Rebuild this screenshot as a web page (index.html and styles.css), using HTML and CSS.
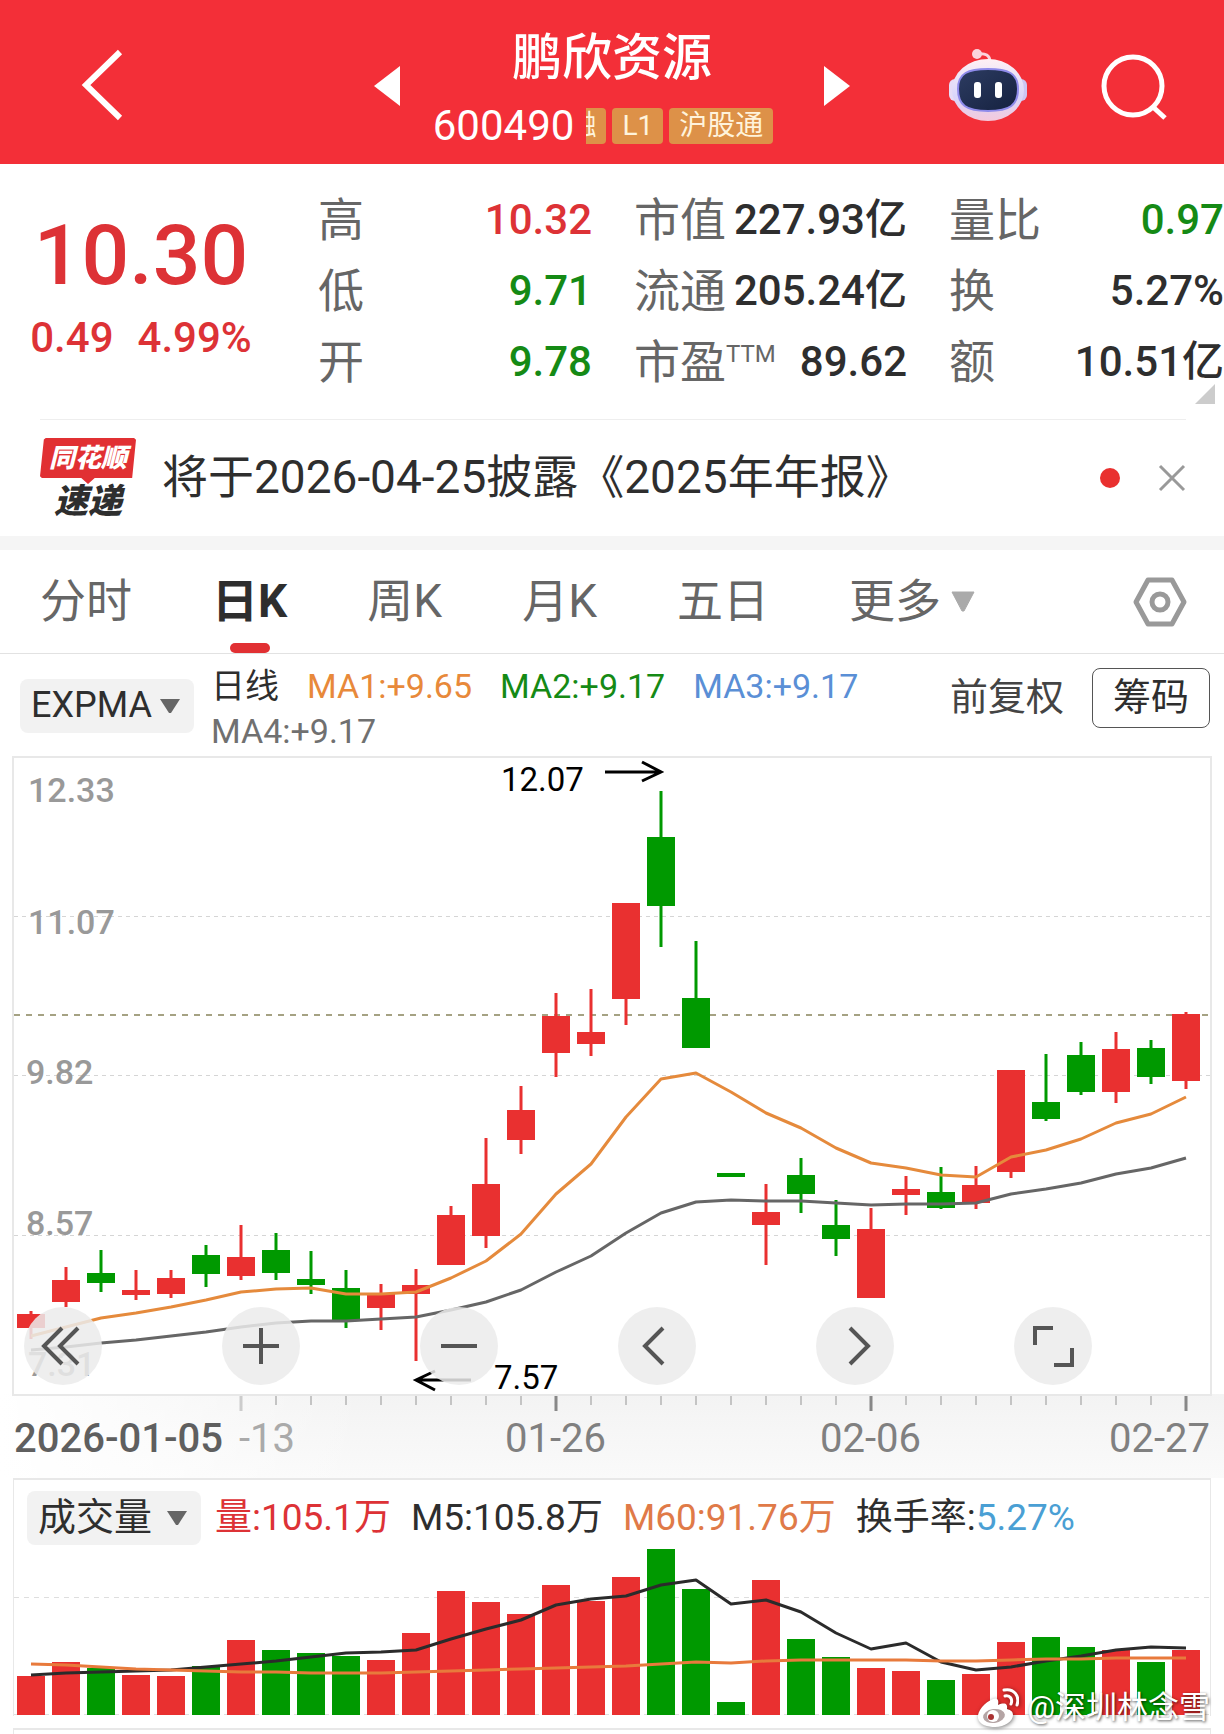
FILE: index.html
```html
<!DOCTYPE html>
<html lang="zh-CN">
<head>
<meta charset="utf-8">
<meta name="viewport" content="width=device-width, initial-scale=1">
<title>鹏欣资源 600490</title>
<link rel="stylesheet" href="styles.css">
</head>
<body>
<header class="topbar">
  <button class="icon-btn back" aria-label="返回">
    <svg width="48" height="76" viewBox="0 0 48 76"><path d="M42 4 8 37l34 33" fill="none" stroke="#fff" stroke-width="6"/></svg>
  </button>
  <button class="icon-btn prev" aria-label="上一只">
    <svg width="26" height="40" viewBox="0 0 26 40"><path d="M26 0v40L0 20z" fill="#fff"/></svg>
  </button>
  <div class="stock">
    <h1 class="stock-name">鹏欣资源</h1>
    <div class="stock-meta">
      <span class="stock-code">600490</span>
      <span class="tag tag-cut"><span>融</span></span>
      <span class="tag">L1</span>
      <span class="tag">沪股通</span>
    </div>
  </div>
  <button class="icon-btn next" aria-label="下一只">
    <svg width="26" height="40" viewBox="0 0 26 40"><path d="M0 0v40l26-20z" fill="#fff"/></svg>
  </button>
  <button class="icon-btn robot" aria-label="智能助手">
    <svg width="80" height="74" viewBox="0 0 80 74">
      <defs>
        <linearGradient id="shell" x1="0" y1="0" x2="0" y2="1"><stop offset="0" stop-color="#fff0f4"/><stop offset=".6" stop-color="#d9d6fb"/><stop offset="1" stop-color="#f4c9dc"/></linearGradient>
        <linearGradient id="visor" x1="0" y1="0" x2="1" y2="1"><stop offset="0" stop-color="#2d3c62"/><stop offset="1" stop-color="#15213f"/></linearGradient>
      </defs>
      <path d="M29 5q13-2 13 8" fill="none" stroke="#fbd3dc" stroke-width="3"/>
      <circle cx="29" cy="5" r="5" fill="#fbd3dc"/>
      <rect x="1" y="30" width="14" height="22" rx="6" fill="#e6dcf7"/>
      <rect x="65" y="30" width="14" height="22" rx="6" fill="#cdc6f4"/>
      <ellipse cx="40" cy="41" rx="36" ry="31" fill="url(#shell)"/>
      <path d="M40 20c20 0 30 4 30 20s-8 22-30 22-30-6-30-22 10-20 30-20z" fill="url(#visor)" stroke="#8f8bea" stroke-width="2"/>
      <rect x="26" y="33" width="7" height="16" rx="3" fill="#fff"/>
      <rect x="47" y="33" width="7" height="16" rx="3" fill="#fff"/>
    </svg>
  </button>
  <button class="icon-btn search" aria-label="搜索">
    <svg width="68" height="68" viewBox="0 0 68 68"><g fill="none" stroke="#fff" stroke-width="5"><circle cx="33" cy="34" r="29"/><path d="m53 55 12 11"/></g></svg>
  </button>
</header>

<main>
  <section class="quote">
    <div class="price-box up">
      <strong class="price">10.30</strong>
      <div class="change"><span>0.49</span><span>4.99%</span></div>
    </div>
    <dl class="facts">
      <div><dt>高</dt><dd class="up">10.32</dd></div>
      <div><dt>低</dt><dd class="down">9.71</dd></div>
      <div><dt>开</dt><dd class="down">9.78</dd></div>
    </dl>
    <dl class="facts">
      <div><dt>市值</dt><dd>227.93亿</dd></div>
      <div><dt>流通</dt><dd>205.24亿</dd></div>
      <div><dt>市盈<sup>TTM</sup></dt><dd>89.62</dd></div>
    </dl>
    <dl class="facts">
      <div><dt>量比</dt><dd class="down">0.97</dd></div>
      <div><dt>换</dt><dd>5.27%</dd></div>
      <div><dt>额</dt><dd>10.51亿</dd></div>
    </dl>
    <svg class="corner" width="20" height="20" viewBox="0 0 20 20"><path d="M20 0v20H0z" fill="#ccc"/></svg>
  </section>

  <section class="notice">
    <div class="brand">
      <span class="brand-top">同花顺</span>
      <span class="brand-bottom">速递</span>
    </div>
    <a class="notice-text" href="#">将于2026-04-25披露《2025年年报》</a>
    <i class="dot"></i>
    <button class="icon-btn" aria-label="关闭">
      <svg width="28" height="28" viewBox="0 0 28 28"><path d="m2 2 24 24M26 2 2 26" stroke="#999" stroke-width="3"/></svg>
    </button>
  </section>

  <nav class="tabs">
    <button>分时</button>
    <button class="active">日K</button>
    <button>周K</button>
    <button>月K</button>
    <button>五日</button>
    <button class="more">更多<svg width="24" height="21" viewBox="0 0 24 21"><path d="M1 1h22L13 20h-2z" fill="#aaa" stroke="#aaa" stroke-linejoin="round"/></svg></button>
    <button class="settings" aria-label="设置">
      <svg width="54" height="50" viewBox="0 0 54 50"><g fill="none" stroke="#999" stroke-width="5" stroke-linejoin="round"><path d="M15 3h24l12 22-12 22H15L3 25z"/><circle cx="27" cy="25" r="8"/></g></svg>
    </button>
  </nav>

  <section class="indicators">
    <label class="picker">
      <select aria-label="主图指标"><option>EXPMA</option></select>
      <svg width="20" height="14" viewBox="0 0 20 14"><path d="M0 0h20L11 14H9z" fill="#666"/></svg>
    </label>
    <p class="legend">
      <span>日线</span><span class="ma1">MA1:+9.65</span><span class="ma2">MA2:+9.17</span><span class="ma3">MA3:+9.17</span><span class="ma4">MA4:+9.17</span>
    </p>
    <button class="adjust">前复权</button>
    <button class="chips">筹码</button>
  </section>

  <section class="chart">
    <svg id="price-chart" class="plot" viewBox="14 758 1196 636" role="img" aria-label="日K线"></svg>
    <div class="controls">
      <button aria-label="最早"><svg width="78" height="78" viewBox="0 0 78 78"><path d="M38 21 20 39l18 18M54 21 36 39l18 18"/></svg></button>
      <button aria-label="放大"><svg width="78" height="78" viewBox="0 0 78 78"><path d="M21 39h36M39 21v36"/></svg></button>
      <button aria-label="缩小"><svg width="78" height="78" viewBox="0 0 78 78"><path d="M21 39h36"/></svg></button>
      <button aria-label="左移"><svg width="78" height="78" viewBox="0 0 78 78"><path d="M45 21 27 39l18 18"/></svg></button>
      <button aria-label="右移"><svg width="78" height="78" viewBox="0 0 78 78"><path d="m34 21 18 18-18 18"/></svg></button>
      <button aria-label="全屏"><svg width="78" height="78" viewBox="0 0 78 78"><path d="M21 38V21h18M58 41v17H40"/></svg></button>
    </div>
  </section>
  <section class="axis">
    <svg id="ticks" class="plot" viewBox="14 1395 1196 18" aria-hidden="true"></svg>
    <div class="dates"><span><b>2026-01-05</b><i>-13</i></span><span>01-26</span><span>02-06</span><span>02-27</span></div>
  </section>

  <section class="volume">
    <div class="volume-head">
      <label class="picker">
        <select aria-label="副图指标"><option>成交量</option></select>
        <svg width="20" height="14" viewBox="0 0 20 14"><path d="M0 0h20L11 14H9z" fill="#666"/></svg>
      </label>
      <span class="up">量:105.1万</span><span>M5:105.8万</span><span class="m60">M60:91.76万</span><span>换手率:<em>5.27%</em></span>
    </div>
    <svg id="volume-chart" class="plot" viewBox="14 1546 1196 170" role="img" aria-label="成交量"></svg>
  </section>
  <section class="next-panel"></section>
</main>

<div class="watermark">
  <svg width="42" height="40" viewBox="0 0 42 40">
    <path d="M16 11C8 14 0 23 1 30c1 7 10 9 17 9 10 0 18-6 18-12 0-4-3-5-6-6 1-5-2-7-9-4 1-4 0-8-5-6z" fill="#fff"/>
    <ellipse cx="17" cy="28" rx="11" ry="7" fill="#b5a5a5" transform="rotate(-8 17 28)"/>
    <circle cx="16" cy="28" r="6" fill="#fff"/><circle cx="14" cy="29" r="3" fill="#a33"/>
    <path d="M28 8c5-1 8 3 6 8M27 2c10-2 16 6 13 15" fill="none" stroke="#fff" stroke-width="3" stroke-linecap="round"/>
  </svg>
  <span>@深圳林念雪</span>
</div>
<script src="chart.js"></script>
</body>
</html>
```
FILE: styles.css
```css
* { box-sizing: border-box; }
body {
  margin: 0;
  background: #fff;
  color: #2e2e2e;
  font-family: Roboto, "Noto Sans CJK SC", sans-serif;
  line-height: 1.2;
  position: relative;
}
h1, p, dl, dd { margin: 0; }
button, select {
  font: inherit;
  color: inherit;
  border: 0;
  padding: 0;
  background: none;
}
svg { display: block; flex: none; }
.icon-btn { flex: none; }
.up { color: #dd3236; }
.down { color: #158a15; }

.topbar {
  display: flex;
  align-items: center;
  height: 164px;
  padding: 8px 56px 0 78px;
  background: #f32f38;
  color: #fff;
}
.prev { margin-left: auto; }
.stock {
  display: flex;
  flex-direction: column;
  align-items: center;
  width: 424px;
  gap: 10px;
}
.stock-name { font-size: 50px; line-height: 60px; font-weight: 500; margin-top: 10px; }
.stock-meta { display: flex; align-items: center; gap: 6px; margin-right: 18px; }
.stock-code { font-size: 42px; line-height: 56px; margin-right: 6px; }
.tag {
  height: 36px;
  padding: 0 10px;
  border-radius: 4px;
  background: #dd9148;
  color: #fff3dc;
  font-size: 28px;
  line-height: 36px;
}
.tag-cut {
  display: flex;
  justify-content: flex-end;
  width: 20px;
  overflow: hidden;
  border-radius: 0 4px 4px 0;
}
.robot { margin-left: 98px; }
.search { margin-left: 72px; }

.quote {
  display: grid;
  grid-template-columns: minmax(0, 276fr) minmax(0, 274fr) minmax(0, 273fr) minmax(0, 275fr);
  column-gap: 42px;
  position: relative;
  padding: 20px 0 22px;
}
.price-box {
  display: flex;
  flex-direction: column;
  align-items: center;
  padding: 22px 0 0 6px;
  font-weight: 500;
}
.price { font-size: 84px; line-height: 100px; font-weight: 500; }
.change { display: flex; gap: 24px; font-size: 42px; line-height: 64px; }
.facts > div {
  display: flex;
  align-items: center;
  justify-content: space-between;
  height: 71px;
}
.facts dt { font-size: 46px; line-height: 56px; color: #666; white-space: nowrap; }
.facts dd { font-size: 42px; line-height: 56px; font-weight: 500; white-space: nowrap; }
.facts sup { font-size: 24px; line-height: 24px; }
.corner { position: absolute; right: 9px; bottom: 15px; }

.notice {
  display: flex;
  align-items: center;
  height: 117px;
  margin: 0 38px 0 40px;
  border-top: 1px solid #eee;
}
.brand {
  display: flex;
  flex-direction: column;
  align-items: center;
  width: 96px;
  font-style: italic;
  font-weight: 900;
}
.brand-top {
  width: 96px;
  padding-bottom: 6px;
  background: #e13033;
  color: #fff;
  font-size: 26px;
  line-height: 40px;
  text-align: center;
  clip-path: polygon(6% 0, 98% 0, 100% 4%, 96% 87%, 57% 87%, 50% 100%, 43% 87%, 2% 87%, 0 83%, 4% 3%);
}
.brand-bottom { font-size: 34px; line-height: 34px; }
.notice-text { margin: 0 auto 0 26px; font-size: 46px; color: inherit; text-decoration: none; white-space: nowrap; }
.dot { width: 20px; height: 20px; margin-right: 38px; border-radius: 50%; background: #e9302f; }

.tabs {
  display: flex;
  gap: 80px;
  height: 118px;
  padding: 0 37px 0 40px;
  border-top: 14px solid #f5f5f5;
  border-bottom: 1px solid #e2e2e2;
  font-size: 46px;
  color: #666;
}
.tabs button { display: flex; flex-direction: column; justify-content: center; align-items: center; white-space: nowrap; }
.tabs .active { position: relative; color: #2e2e2e; font-weight: 700; }
.active::after {
  content: "";
  position: absolute;
  bottom: 0;
  width: 40px;
  height: 10px;
  border-radius: 5px;
  background: #e13033;
}
.tabs .more { flex-direction: row; align-items: center; gap: 10px; }
.tabs .settings { margin-left: auto; }

.indicators {
  display: flex;
  align-items: center;
  height: 104px;
  padding: 0 14px 0 20px;
  font-size: 34px;
}
.picker {
  display: grid;
  grid-template-columns: 1fr 20px;
  align-items: center;
  width: 174px;
  height: 54px;
  padding: 0 14px 0 11px;
  border-radius: 8px;
  background: #f2f2f2;
  font-size: 36px;
}
.picker select { grid-area: 1 / 1 / 2 / 3; appearance: none; width: 100%; height: 54px; }
.picker svg { grid-area: 1 / 2; pointer-events: none; }
.legend {
  display: flex;
  flex-wrap: wrap;
  flex: 1;
  column-gap: 28px;
  margin: 6px 0 0 17px;
  line-height: 45px;
}
.ma1 { color: #e8893a; }
.ma2 { color: #158a15; }
.ma3 { color: #5a8fd6; }
.ma4 { color: #707070; }
.adjust, .chips { align-self: flex-start; height: 60px; margin-top: 14px; font-size: 38px; }
.adjust { color: #444; margin-right: 28px; }
.chips { width: 118px; border: 1px solid #555; border-radius: 8px; }

.chart { position: relative; margin: 0 14px; outline: 2px solid #e8e8e8; }
.plot { width: 100%; height: auto; }
.plot text { font-family: Roboto, sans-serif; }
.controls {
  position: absolute;
  left: 10px;
  right: 118px;
  bottom: 9px;
  display: flex;
  justify-content: space-between;
}
.controls button { border-radius: 50%; background: rgba(235, 235, 235, 0.85); }
.controls path { fill: none; stroke: #555; stroke-width: 4; }

.axis {
  height: 84px;
  padding: 1px 14px 0;
  background: linear-gradient(90deg, #fff, rgba(255, 255, 255, 0) 30%), linear-gradient(#f3f3f3, #fafafa);
}
.dates {
  display: grid;
  grid-template-columns: 384fr 315fr 315fr 182fr;
  margin-top: 4px;
  font-size: 40px;
  line-height: 44px;
  color: #808080;
  text-align: center;
}
.dates span:first-child { text-align: left; }
.dates span:last-child { text-align: right; }
.dates b { font-weight: 500; color: #5f5f5f; margin-right: 16px; }
.dates i { font-style: normal; color: #aaa; }

.volume { margin: 0 13px; border: 2px solid #e8e8e8; border-width: 2px 1px 0; }
.volume-head {
  display: flex;
  align-items: center;
  gap: 20px;
  height: 66px;
  padding: 10px 0 0 13px;
  font-size: 37px;
}
.volume-head .picker { margin-right: -6px; font-size: 38px; }
.volume-head em { font-style: normal; color: #4a9fd4; }
.m60 { color: #e07a48; }
.next-panel { height: 6px; margin: 12px 13px 0; border: 1px solid #e8e8e8; border-width: 2px 1px 0; }

.watermark {
  position: absolute;
  right: 14px;
  bottom: 4px;
  display: flex;
  align-items: center;
  gap: 8px;
  color: #fff;
  font-size: 31px;
  line-height: 44px;
  text-shadow: 1px 1px 3px rgba(0, 0, 0, 0.7);
}
.watermark svg { filter: drop-shadow(1px 1px 2px rgba(0, 0, 0, 0.5)); }
```
FILE: chart.js
```js
const RED = "#e93030";
const GREEN = "#009900";
const STEP = 35;
const FIRST = 31;
const x = i => FIRST + i * STEP;

// colour, wick top, body top, body bottom, wick bottom
const candles = [
  ["r",1311,1314,1328,1339],["r",1267,1280,1302,1307],["g",1250,1273,1283,1292],["r",1270,1290,1295,1300],
  ["r",1270,1278,1294,1298],["g",1245,1255,1274,1287],["r",1225,1257,1276,1280],["g",1233,1250,1273,1280],
  ["g",1251,1279,1285,1294],["g",1270,1288,1320,1328],["r",1284,1294,1308,1330],["r",1269,1285,1294,1361],
  ["r",1206,1215,1265,1265],["r",1138,1184,1236,1248],["r",1086,1110,1140,1154],["r",993,1016,1053,1077],
  ["r",989,1032,1044,1056],["r",903,903,999,1025],["g",791,837,906,947],["g",941,998,1048,1048],
  ["g",1173,1173,1177,1177],["r",1184,1212,1225,1265],["g",1158,1175,1194,1213],["g",1200,1225,1239,1256],
  ["r",1208,1229,1298,1298],["r",1176,1189,1195,1215],["g",1167,1192,1208,1209],["r",1166,1185,1203,1209],
  ["r",1070,1070,1172,1178],["g",1054,1102,1119,1121],["g",1042,1055,1092,1095],["r",1032,1049,1092,1103],
  ["g",1040,1048,1077,1084],["r",1012,1014,1081,1089]
];
const fast = [1336,1327,1318,1313,1307,1300,1292,1289,1288,1294,1294,1292,1278,1261,1234,1194,1164,1117,1079,1073,1092,1113,1128,1148,1163,1168,1175,1177,1157,1150,1139,1123,1114,1097];
const slow = [1350,1347,1343,1340,1336,1332,1327,1323,1321,1321,1319,1317,1310,1302,1290,1272,1256,1233,1213,1202,1200,1201,1201,1203,1205,1204,1204,1203,1194,1189,1183,1174,1168,1158];

const volumes = [1676,1662,1668,1675,1676,1666,1640,1650,1653,1656,1660,1633,1591,1602,1614,1585,1601,1577,1549,1589,1702,1580,1639,1657,1668,1671,1680,1674,1642,1637,1647,1650,1662,1650];
const m5 = [1675,1673,1672,1671,1670,1667,1664,1661,1657,1653,1652,1650,1639,1629,1620,1605,1599,1596,1585,1580,1604,1600,1612,1633,1649,1643,1662,1670,1667,1661,1656,1650,1647,1648];
const m60 = [1664,1665,1667,1669,1670,1671,1672,1672,1673,1673,1673,1672,1671,1670,1669,1668,1667,1666,1664,1662,1663,1661,1660,1660,1660,1660,1661,1661,1660,1659,1659,1658,1658,1658];

const paint = c => (c === "r" ? RED : GREEN);
const rect = (cx, w, top, bottom, fill) =>
  `<rect x="${cx - w / 2}" y="${top}" width="${w}" height="${bottom - top}" fill="${fill}"/>`;
const line = (ys, stroke) =>
  `<polyline points="${ys.map((y, i) => x(i) + "," + y).join(" ")}" fill="none" stroke="${stroke}" stroke-width="3" stroke-linejoin="round"/>`;
const grid = (y, stroke, dash) =>
  `<path d="M14 ${y}H1210" stroke="${stroke}" stroke-width="1" stroke-dasharray="${dash}"/>`;
const label = (lx, y, text, size, fill, weight) =>
  `<text x="${lx}" y="${y}" font-size="${size}" fill="${fill}" font-weight="${weight}">${text}</text>`;

let svg = "";
for (const y of [916.5, 1075.5, 1235.5]) svg += grid(y, "#d5d5d5", "4 4");
for (const [lx, y, text] of [[28,802,"12.33"],[28,934,"11.07"],[26,1084,"9.82"],[26,1235,"8.57"],[28,1376,"7.31"]])
  svg += label(lx, y, text, 34, "#999", 500);
svg += `<path d="M14 1015H1210" stroke="#a5a283" stroke-width="2" stroke-dasharray="6 6"/>`;
candles.forEach(([c, hi, top, bottom, lo], i) => {
  svg += rect(x(i), 3, hi, lo, paint(c)) + rect(x(i), 28, top, bottom, paint(c));
});
svg += line(slow, "#666") + line(fast, "#e58a3c");
svg += label(501, 791, "12.07", 33, "#000", 400) + label(494, 1389, "7.57", 33, "#000", 400);
svg += `<g fill="none" stroke="#000" stroke-width="3"><path d="M605 772h54M642 762l19 10-19 9"/><path d="M471 1380h-54M435 1371l-19 9 19 10"/></g>`;
document.getElementById("price-chart").innerHTML = svg;

let ticks = "";
for (let i = 6; i < candles.length; i++) {
  const major = (i - 6) % 9 === 0;
  ticks += rect(x(i), major ? 3 : 2, 1395, major ? 1411 : 1405, i === 6 ? "#ccc" : major ? "#888" : "#c4c4c4");
}
document.getElementById("ticks").innerHTML = ticks;

let vol = grid(1597.5, "#dedede", "5 5") + grid(1714.5, "#dedede", "5 5");
volumes.forEach((top, i) => { vol += rect(x(i), 28, top, 1715, paint(candles[i][0])); });
vol += line(m5, "#2b2b2b") + line(m60, "#e87a3c");
document.getElementById("volume-chart").innerHTML = vol;
```
